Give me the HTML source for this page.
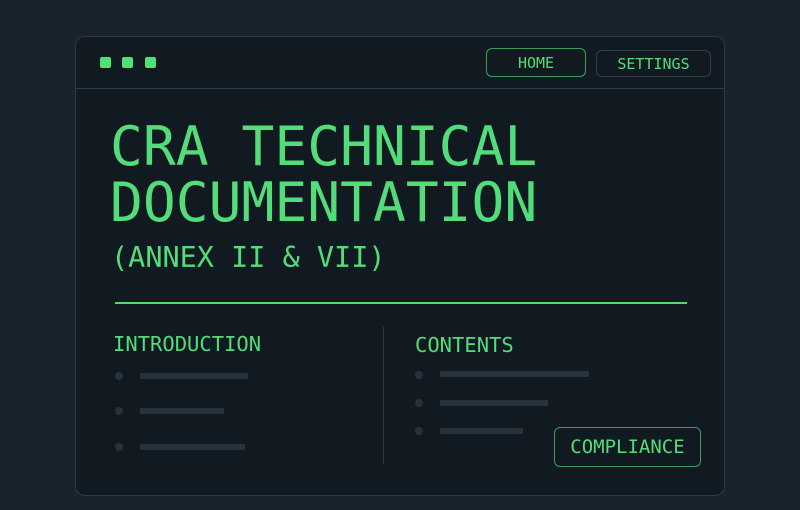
<!DOCTYPE html>
<html><head><style>
*{margin:0;padding:0;box-sizing:border-box}
body{width:800px;height:510px;background:#19232c;position:relative;overflow:hidden;font-family:"DejaVu Sans Mono","Liberation Mono",monospace;color:#52dd7a}
.card{position:absolute;left:75px;top:36px;width:650px;height:460px;background:#111a21;border:1px solid #2a3945;border-radius:10px}
.a{position:absolute}
.dot{position:absolute;top:57px;width:11px;height:11px;background:#4fe077;border-radius:2px}
.btn{position:absolute;border-radius:6px;display:flex;align-items:center;justify-content:center;font-size:15px;color:#52dd7a}
.b{position:absolute;width:8px;height:8px;border-radius:50%;background:#26323c}
.l{position:absolute;height:6px;background:#26323c}
</style></head><body>
<div class="card"></div>
<div class="dot" style="left:100px"></div><div class="dot" style="left:122px"></div><div class="dot" style="left:145px"></div>
<div class="btn" style="left:486px;top:48px;width:100px;height:29px;border:1px solid #3f9a5c">HOME</div>
<div class="btn" style="left:596px;top:50px;width:115px;height:27px;border:1px solid #2f4150">SETTINGS</div>
<div class="a" style="left:76px;top:88px;width:648px;height:1px;background:#2c3b47"></div>
<div class="a" style="left:110px;top:118px;font-size:54.6px;line-height:56px;white-space:nowrap">CRA TECHNICAL<br>DOCUMENTATION</div>
<div class="a" style="left:111px;top:240px;font-size:28.5px;line-height:36px;white-space:nowrap">(ANNEX II &amp; VII)</div>
<div class="a" style="left:115px;top:302px;width:572px;height:2px;background:#4fd97a"></div>
<div class="a" style="left:113px;top:332px;font-size:20.5px;line-height:24px">INTRODUCTION</div>
<div class="a" style="left:415px;top:333px;font-size:20.5px;line-height:24px">CONTENTS</div>
<div class="a" style="left:383px;top:327px;width:1px;height:137px;background:#2a3843"></div>
<div class="b" style="left:115px;top:372px"></div><div class="l" style="left:140px;top:373px;width:108px"></div>
<div class="b" style="left:115px;top:407px"></div><div class="l" style="left:140px;top:408px;width:84px"></div>
<div class="b" style="left:115px;top:443px"></div><div class="l" style="left:140px;top:444px;width:105px"></div>
<div class="b" style="left:415px;top:371px"></div><div class="l" style="left:440px;top:371px;width:149px"></div>
<div class="b" style="left:415px;top:399px"></div><div class="l" style="left:440px;top:400px;width:108px"></div>
<div class="b" style="left:415px;top:427px"></div><div class="l" style="left:440px;top:428px;width:83px"></div>
<div class="btn" style="left:554px;top:427px;width:147px;height:40px;border:1px solid #3f9a5c;font-size:19px">COMPLIANCE</div>
</body></html>
